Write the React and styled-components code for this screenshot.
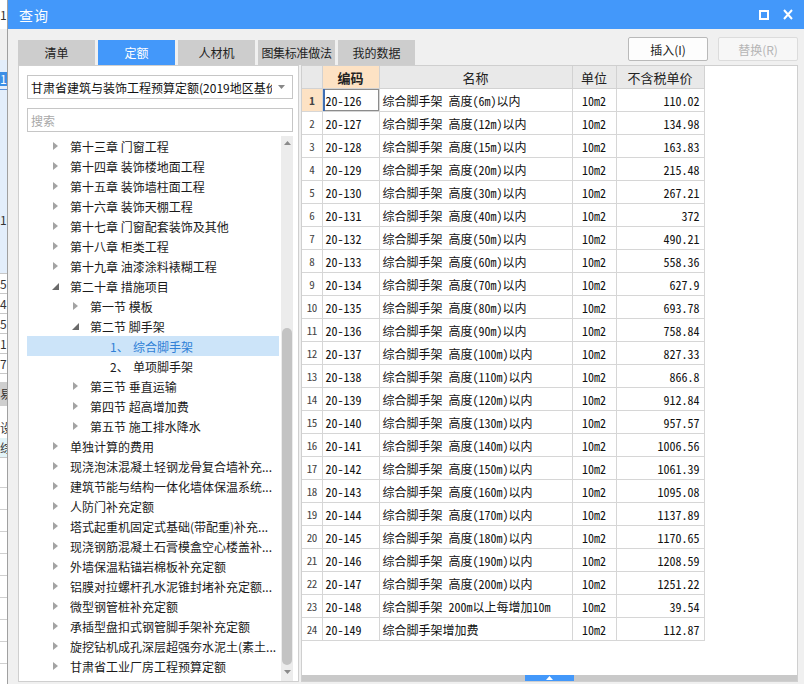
import React from 'react';
import styled, { createGlobalStyle } from 'styled-components';

const Global = createGlobalStyle`
  html, body { margin: 0; padding: 0; overflow: hidden; background: #fff; }
  body { font-family: "Noto Sans CJK SC", "Noto Sans", sans-serif; }
  #root { width: 804px; height: 684px; }
`;

const Screen = styled.div`
  display: flex;
  width: 804px;
  height: 684px;
  overflow: hidden;
`;

const Backdrop = styled.div`
  width: 7px;
  flex: none;
  display: flex;
  flex-direction: column;
  overflow: hidden;
  background: #fff;
`;

const BackPiece = styled.div`
  flex: none;
  height: ${p => p.$h}px;
  background: ${p => p.$bg};
  color: ${p => p.$fg || '#333'};
  border-bottom: ${p => (p.$line ? `1px solid ${p.$line}` : 'none')};
  box-sizing: border-box;
  font-size: 12px;
  line-height: ${p => p.$h}px;
  white-space: nowrap;
  overflow: hidden;
`;

const Dialog = styled.div`
  flex: 1;
  min-width: 0;
  display: flex;
  flex-direction: column;
  border-left: 1px solid #a0a0a0;
  background: #f0f0f0;
`;

const TitleBar = styled.div`
  height: 29px;
  flex: none;
  background: #4398fa;
  display: flex;
  align-items: center;
  padding: 0 8px 0 11px;
  color: #fff;
`;

const Title = styled.div`
  flex: 1;
  font-size: 14px;
  letter-spacing: 1px;
`;

const TitleBtn = styled.div`
  width: 16px;
  height: 16px;
  margin-left: 8px;
  display: flex;
  align-items: center;
  justify-content: center;
`;

const Body = styled.div`
  flex: 1;
  min-height: 0;
  display: flex;
  flex-direction: column;
  padding: 8px 6px 2px 10px;
`;

const TopRow = styled.div`
  height: 28px;
  flex: none;
  display: flex;
  align-items: flex-end;
`;

const Tabs = styled.div`
  display: flex;
  gap: 3px;
  flex: 1;
`;

const Tab = styled.div`
  width: 77px;
  height: 25px;
  display: flex;
  align-items: center;
  justify-content: center;
  font-size: 12px;
  background: ${p => (p.$active ? '#4398fa' : '#cdcdcd')};
  color: ${p => (p.$active ? '#fff' : '#222')};
  white-space: nowrap;
  letter-spacing: ${p => (p.$tight ? '-0.3px' : '0')};
`;

const ActionBtn = styled.div`
  align-self: flex-start;
  width: 78px;
  height: 22px;
  margin-left: 10px;
  border: 1px solid ${p => (p.$disabled ? '#dcdcdc' : '#b9b9b9')};
  border-radius: 2px;
  background: ${p => (p.$disabled ? '#f7f7f7' : '#fdfdfd')};
  color: ${p => (p.$disabled ? '#b5b5b5' : '#222')};
  font-size: 12px;
  display: flex;
  align-items: center;
  justify-content: center;
`;

const Content = styled.div`
  flex: 1;
  min-height: 0;
  display: flex;
  gap: 2px;
`;

const LeftPanel = styled.div`
  width: 281px;
  flex: none;
  box-sizing: border-box;
  border: 1px solid #cfcfcf;
  background: #fff;
  display: flex;
  flex-direction: column;
  padding: 9px 5px 0 8px;
`;

const Select = styled.div`
  height: 24px;
  flex: none;
  box-sizing: border-box;
  border: 1px solid #c6c6c6;
  display: flex;
  align-items: center;
  padding: 0 6px 0 3px;
  font-size: 12px;
  color: #111;
`;

const SelectText = styled.div`
  flex: 1;
  overflow: hidden;
  white-space: nowrap;
`;

const SelectArrow = styled.div`
  width: 10px;
  margin-left: 4px;
  display: flex;
  justify-content: center;
`;

const Search = styled.div`
  height: 24px;
  flex: none;
  margin-top: 9px;
  box-sizing: border-box;
  border: 1px solid #c6c6c6;
  display: flex;
  align-items: center;
  padding-left: 3px;
  font-size: 12px;
  color: #a8a8a8;
`;

const TreeArea = styled.div`
  flex: 1;
  min-height: 0;
  margin-top: 4px;
  display: flex;
  gap: 2px;
`;

const TreeList = styled.div`
  flex: 1;
  min-width: 0;
  display: flex;
  flex-direction: column;
`;

const TreeRow = styled.div`
  height: 20px;
  flex: none;
  display: flex;
  align-items: center;
  padding-left: ${p => p.$indent}px;
  background: ${p => (p.$sel ? '#cce4f9' : 'transparent')};
  color: ${p => (p.$sel ? '#2f7fd6' : '#1a1a1a')};
  font-size: 12px;
`;

const Caret = styled.div`
  width: 8px;
  height: 20px;
  flex: none;
  margin-right: 11px;
  display: flex;
  align-items: center;
  justify-content: center;
`;

const NumLabel = styled.span`
  width: 23px;
  flex: none;
  white-space: nowrap;
`;

const TreeText = styled.span`
  flex: 1;
  min-width: 0;
  overflow: hidden;
  white-space: nowrap;
  padding-right: 2px;
`;

const VScroll = styled.div`
  width: 12px;
  flex: none;
  background: #ececec;
  display: flex;
  flex-direction: column;
  align-items: center;
  padding-bottom: 2px;
`;

const ScrollArrow = styled.div`
  height: 14px;
  flex: none;
  display: flex;
  align-items: center;
  justify-content: center;
`;

const ScrollGap = styled.div`
  height: ${p => p.$h}px;
  flex: none;
`;

const Thumb = styled.div`
  width: 10px;
  flex: 1;
  border-radius: 5px;
  background: #c3c3c3;
`;

const TablePanel = styled.div`
  flex: 1;
  min-width: 0;
  box-sizing: border-box;
  border: 1px solid #cfcfcf;
  background: #fff;
  display: flex;
  flex-direction: column;
`;

const TableWrap = styled.div`
  flex: 1;
  min-height: 0;
  overflow: hidden;
`;

const Grid = styled.table`
  border-collapse: collapse;
  table-layout: fixed;
  width: 402px;
  font-family: "Noto Sans Mono CJK SC", "Noto Sans CJK SC", "Liberation Mono", monospace;
  font-size: 12px;
  color: #111;
`;

const Th = styled.th`
  height: 22px;
  padding: 0;
  border: 1px solid #d2d2d2;
  border-top: none;
  background: ${p => (p.$hot ? '#fde2c4' : '#e9e9e9')};
  font-family: "Noto Sans CJK SC", sans-serif;
  font-weight: ${p => (p.$hot ? 700 : 400)};
  font-size: 13px;
  color: #222;
  &:first-child { border-left: none; }
`;

const Td = styled.td`
  height: 22px;
  padding: 0 ${p => (p.$align === 'right' ? '4px' : '0')} 0 ${p => (p.$align === 'left' ? '3px' : '0')};
  border: 1px solid #d6d6d6;
  text-align: ${p => p.$align};
  white-space: nowrap;
  overflow: hidden;
  background: ${p => (p.$hot ? '#fde2c4' : '#fff')};
  font-weight: ${p => (p.$hot ? 700 : 400)};
  color: ${p => (p.$num ? '#444' : '#111')};
  font-size: ${p => (p.$num ? '11px' : '12px')};
  letter-spacing: ${p => (p.$num ? '-0.5px' : '0')};
  box-shadow: ${p => (p.$focus ? 'inset 2px 0 0 #3f6db3, inset 0 0 0 1px #8c8c8c' : 'none')};
  &:first-child { border-left: none; }
`;

const Splitter = styled.div`
  height: 6px;
  flex: none;
  background: #c9c9c9;
  display: flex;
  justify-content: center;
`;

const SplitHandle = styled.div`
  width: 49px;
  height: 6px;
  background: #4398fa;
  display: flex;
  align-items: center;
  justify-content: center;
`;

const CollapsedCaret = () => (
  <svg width="5" height="8" viewBox="0 0 5 8"><path d="M0 0 L5 4 L0 8 Z" fill="#a3a3a3" /></svg>
);
const OpenCaret = () => (
  <svg width="7" height="7" viewBox="0 0 7 7"><path d="M7 0 L7 7 L0 7 Z" fill="#6a6a6a" /></svg>
);

const tree = [
  { l: 1, t: '第十三章 门窗工程' },
  { l: 1, t: '第十四章 装饰楼地面工程' },
  { l: 1, t: '第十五章 装饰墙柱面工程' },
  { l: 1, t: '第十六章 装饰天棚工程' },
  { l: 1, t: '第十七章 门窗配套装饰及其他' },
  { l: 1, t: '第十八章 柜类工程' },
  { l: 1, t: '第十九章 油漆涂料裱糊工程' },
  { l: 1, t: '第二十章 措施项目', open: true },
  { l: 2, t: '第一节 模板' },
  { l: 2, t: '第二节 脚手架', open: true },
  { l: 3, n: '1、', t: '综合脚手架', sel: true },
  { l: 3, n: '2、', t: '单项脚手架' },
  { l: 2, t: '第三节 垂直运输' },
  { l: 2, t: '第四节 超高增加费' },
  { l: 2, t: '第五节 施工排水降水' },
  { l: 1, t: '单独计算的费用' },
  { l: 1, t: '现浇泡沫混凝土轻钢龙骨复合墙补充...' },
  { l: 1, t: '建筑节能与结构一体化墙体保温系统...' },
  { l: 1, t: '人防门补充定额' },
  { l: 1, t: '塔式起重机固定式基础(带配重)补充...' },
  { l: 1, t: '现浇钢筋混凝土石膏模盒空心楼盖补...' },
  { l: 1, t: '外墙保温粘锚岩棉板补充定额' },
  { l: 1, t: '铝膜对拉螺杆孔水泥锥封堵补充定额...' },
  { l: 1, t: '微型钢管桩补充定额' },
  { l: 1, t: '承插型盘扣式钢管脚手架补充定额' },
  { l: 1, t: '旋挖钻机成孔深层超强夯水泥土(素土...' },
  { l: 1, t: '甘肃省工业厂房工程预算定额' },
];

const heights = [6, 12, 15, 20, 30, 40, 50, 60, 70, 80, 90, 100, 110, 120, 130, 140, 150, 160, 170, 180, 190, 200];
const prices = ['110.02', '134.98', '163.83', '215.48', '267.21', '372', '490.21', '558.36', '627.9', '693.78', '758.84', '827.33', '866.8', '912.84', '957.57', '1006.56', '1061.39', '1095.08', '1137.89', '1170.65', '1208.59', '1251.22'];
const rows = heights.map((h, i) => ({ code: `20-${126 + i}`, name: `综合脚手架 高度(${h}m)以内`, price: prices[i] }));
rows.push({ code: '20-148', name: '综合脚手架 200m以上每增加10m', price: '39.54' });
rows.push({ code: '20-149', name: '综合脚手架增加费', price: '112.87' });

const back = [
  { h: 29, bg: '#ffffff', txt: '1(' },
  { h: 31, bg: '#f0f0f0' },
  { h: 12, bg: '#e3eefb' },
  { h: 14, bg: '#3b8ee6', fg: '#fff', txt: '10' },
  { h: 4, bg: '#e3eefb', line: '#5a8fd8' },
  { h: 120, bg: '#e3eefb' },
  { h: 20, bg: '#e3eefb', txt: '10' },
  { h: 44, bg: '#e3eefb', line: '#c8c8c8' },
  { h: 20, bg: '#fff', line: '#c8c8c8', txt: '5' },
  { h: 20, bg: '#fff', line: '#c8c8c8', txt: '4' },
  { h: 20, bg: '#fff', line: '#c8c8c8', txt: '5' },
  { h: 20, bg: '#fff', line: '#c8c8c8', txt: '1' },
  { h: 20, bg: '#fff', line: '#c8c8c8', txt: '7' },
  { h: 8, bg: '#fff' },
  { h: 24, bg: '#cfcfcf', txt: '易' },
  { h: 12, bg: '#fff' },
  { h: 20, bg: '#fff', txt: '设' },
  { h: 20, bg: '#e3f4f8', txt: '综', line: '#c8c8c8' },
  { h: 30, bg: '#fff', line: '#d0d0d0' },
  { h: 22, bg: '#fff', line: '#d0d0d0' },
  { h: 22, bg: '#fff', line: '#d0d0d0' },
  { h: 22, bg: '#fff', line: '#d0d0d0' },
  { h: 22, bg: '#fff', line: '#d0d0d0' },
  { h: 22, bg: '#fff', line: '#d0d0d0' },
  { h: 22, bg: '#fff', line: '#d0d0d0' },
  { h: 22, bg: '#fff', line: '#d0d0d0' },
  { h: 22, bg: '#fff', line: '#d0d0d0' },
];

const indentFor = l => (l === 1 ? 24 : l === 2 ? 44 : 83);

export default function App() {
  return (
    <>
      <Global />
      <Screen>
        <Backdrop>
          {back.map((b, i) => (
            <BackPiece key={i} $h={b.h} $bg={b.bg} $fg={b.fg} $line={b.line}>{b.txt || ''}</BackPiece>
          ))}
        </Backdrop>
        <Dialog>
          <TitleBar>
            <Title>查询</Title>
            <TitleBtn>
              <svg width="10" height="10" viewBox="0 0 10 10"><rect x="1" y="1" width="8" height="8" fill="none" stroke="#fff" strokeWidth="2" /></svg>
            </TitleBtn>
            <TitleBtn>
              <svg width="10" height="11" viewBox="0 0 10 11"><path d="M1 1 L9 10 M9 1 L1 10" stroke="#fff" strokeWidth="2" /></svg>
            </TitleBtn>
          </TitleBar>
          <Body>
            <TopRow>
              <Tabs>
                <Tab>清单</Tab>
                <Tab $active>定额</Tab>
                <Tab>人材机</Tab>
                <Tab $tight>图集标准做法</Tab>
                <Tab>我的数据</Tab>
              </Tabs>
              <ActionBtn>插入(I)</ActionBtn>
              <ActionBtn $disabled>替换(R)</ActionBtn>
            </TopRow>
            <Content>
              <LeftPanel>
                <Select>
                  <SelectText>甘肃省建筑与装饰工程预算定额(2019地区基价)</SelectText>
                  <SelectArrow>
                    <svg width="7" height="4" viewBox="0 0 7 4"><path d="M0 0 L7 0 L3.5 4 Z" fill="#888" /></svg>
                  </SelectArrow>
                </Select>
                <Search>搜索</Search>
                <TreeArea>
                  <TreeList>
                    {tree.map((r, i) => (
                      <TreeRow key={i} $indent={indentFor(r.l)} $sel={r.sel}>
                        {r.l < 3 && <Caret>{r.open ? <OpenCaret /> : <CollapsedCaret />}</Caret>}
                        {r.n && <NumLabel>{r.n}</NumLabel>}
                        <TreeText>{r.t}</TreeText>
                      </TreeRow>
                    ))}
                  </TreeList>
                  <VScroll>
                    <ScrollArrow>
                      <svg width="7" height="4" viewBox="0 0 7 4"><path d="M0 4 L7 4 L3.5 0 Z" fill="#8a8a8a" /></svg>
                    </ScrollArrow>
                    <ScrollGap $h={178} />
                    <Thumb />
                    <ScrollArrow>
                      <svg width="7" height="4" viewBox="0 0 7 4"><path d="M0 0 L7 0 L3.5 4 Z" fill="#8a8a8a" /></svg>
                    </ScrollArrow>
                  </VScroll>
                </TreeArea>
              </LeftPanel>
              <TablePanel>
                <TableWrap>
                  <Grid>
                    <colgroup>
                      <col style={{ width: 20 }} />
                      <col style={{ width: 57 }} />
                      <col style={{ width: 193 }} />
                      <col style={{ width: 44 }} />
                      <col style={{ width: 88 }} />
                    </colgroup>
                    <thead>
                      <tr>
                        <Th />
                        <Th $hot>编码</Th>
                        <Th>名称</Th>
                        <Th>单位</Th>
                        <Th>不含税单价</Th>
                      </tr>
                    </thead>
                    <tbody>
                      {rows.map((r, i) => (
                        <tr key={r.code}>
                          <Td $align="center" $num $hot={i === 0}>{i + 1}</Td>
                          <Td $align="left" $focus={i === 0}>{r.code}</Td>
                          <Td $align="left">{r.name}</Td>
                          <Td $align="center">10m2</Td>
                          <Td $align="right">{r.price}</Td>
                        </tr>
                      ))}
                    </tbody>
                  </Grid>
                </TableWrap>
                <Splitter>
                  <SplitHandle>
                    <svg width="7" height="4" viewBox="0 0 7 4"><path d="M0 4 L7 4 L3.5 0 Z" fill="#fff" /></svg>
                  </SplitHandle>
                </Splitter>
              </TablePanel>
            </Content>
          </Body>
        </Dialog>
      </Screen>
    </>
  );
}
